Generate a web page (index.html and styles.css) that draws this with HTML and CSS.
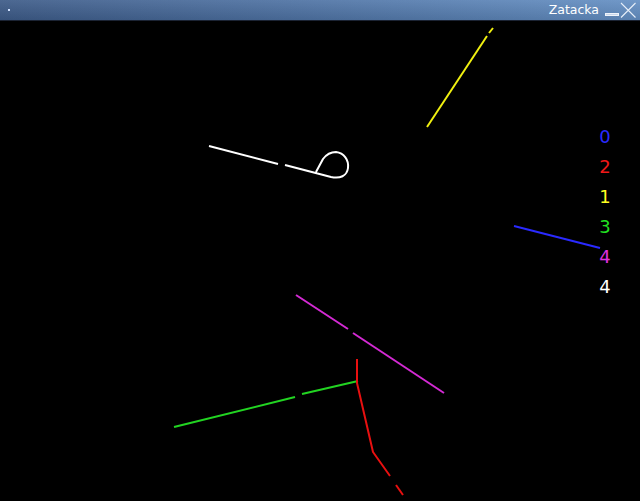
FILE: index.html
```html
<!DOCTYPE html>
<html>
<head>
<meta charset="utf-8">
<title>Zatacka</title>
<link rel="stylesheet" href="styles.css">
</head>
<body>
<div class="window">
  <div class="titlebar">
    <span class="sysdot"></span>
    <span class="title">Zatacka</span>
    <svg class="btn" width="16" height="20" viewBox="0 0 16 20">
      <rect x="1.5" y="13.5" width="13" height="2" fill="#c8d6ea" stroke="#eef3fa" stroke-width="1"/>
    </svg>
    <svg class="btn" width="17" height="20" viewBox="0 0 17 20">
      <path d="M1 3 L15.5 17.5 M15.5 3 L1 17.5" stroke="#e6eef8" stroke-width="1.1" fill="none"/>
    </svg>
  </div>
  <div class="arena">
    <svg class="field" width="640" height="480" viewBox="0 21 640 480">
      <g fill="none" stroke-width="2" stroke-linecap="butt" stroke-linejoin="round">
        <!-- yellow -->
        <path d="M427 127 L487 36" stroke="#f0f010"/>
        <path d="M489 33 L493 28" stroke="#f0f010"/>
        <!-- white -->
        <path d="M209 146 L278 164" stroke="#ffffff"/>
        <path d="M285 165 L331 177 C340 179 347 176 348 168 C349 160 344 153 336 152 C330 152 326 155 323 159 L316 172" stroke="#ffffff"/>
        <!-- blue -->
        <path d="M514 226 L600 248" stroke="#2a2aff"/>
        <!-- magenta -->
        <path d="M296 295 L348 329" stroke="#d42ad4"/>
        <path d="M353 333 L444 393" stroke="#d42ad4"/>
        <!-- green -->
        <path d="M174 427 L295 397" stroke="#22d422"/>
        <path d="M302 394 L358 381" stroke="#22d422"/>
        <!-- red -->
        <path d="M357 359 L357 383 L373 452 L390 476" stroke="#e81010"/>
        <path d="M396 485 L403 495" stroke="#e81010"/>
      </g>
    </svg>
    <div class="scores">
      <span class="score blue">0</span>
      <span class="score red">2</span>
      <span class="score yellow">1</span>
      <span class="score green">3</span>
      <span class="score magenta">4</span>
      <span class="score white">4</span>
    </div>
  </div>
</div>
</body>
</html>
```
FILE: styles.css
```css
html, body {
  margin: 0;
  padding: 0;
  background: #000;
}
.window {
  width: 640px;
  height: 501px;
  display: flex;
  flex-direction: column;
  overflow: hidden;
}
.titlebar {
  height: 20px;
  flex: 0 0 20px;
  border-bottom: 1px solid #1b2333;
  background:
    linear-gradient(to bottom, rgba(255,255,255,0.08), rgba(0,0,0,0.10)),
    linear-gradient(to right, #3d5b88 0%, #4e72a3 45%, #6590c4 100%);
  display: flex;
  align-items: center;
  padding: 0 3px 0 8px;
  font-family: "DejaVu Sans", sans-serif;
  color: #ffffff;
}
.sysdot {
  width: 2px;
  height: 2px;
  background: #cfe0ff;
  margin-top: 0;
}
.title {
  margin-left: auto;
  font-size: 12.5px;
  line-height: 20px;
  letter-spacing: 0;
  margin-right: 5px;
}
.btn {
  display: block;
}
.arena {
  position: relative;
  flex: 1;
  background: #000;
}
.field {
  display: block;
}
.scores {
  position: absolute;
  top: 101px;
  right: 20px;
  width: 30px;
  display: flex;
  flex-direction: column;
  align-items: center;
  font-family: "DejaVu Sans", sans-serif;
  font-size: 18px;
  line-height: 30px;
}
.blue { color: #2a2aff; }
.red { color: #f01818; }
.yellow { color: #ffff20; }
.green { color: #22e022; }
.magenta { color: #e030e0; }
.white { color: #ffffff; }
```
